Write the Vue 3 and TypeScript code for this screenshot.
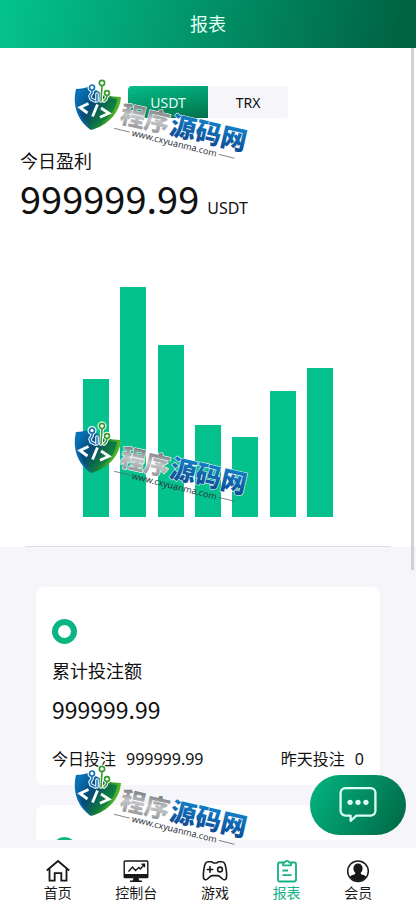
<script setup lang="ts">
import { ref } from 'vue'

type Tab = { id: string; label: string }

const currencies: string[] = ['USDT', 'TRX']
const currency = ref<string>('USDT')

const bars: number[] = [12, 20, 15, 8, 7, 11, 13]
const peak = Math.max(...bars)

const tabs: Tab[] = [
  { id: 'home', label: '首页' },
  { id: 'console', label: '控制台' },
  { id: 'game', label: '游戏' },
  { id: 'report', label: '报表' },
  { id: 'member', label: '会员' },
]
const activeTab = ref<string>('report')

const marks: string[] = ['first', 'second', 'third']
</script>

<template>
  <div class="page">
    <header class="header">
      <h1>报表</h1>
    </header>

    <main class="content">
      <section class="summary">
        <div class="switch">
          <button
            v-for="c in currencies"
            :key="c"
            type="button"
            :class="{ active: c === currency }"
            @click="currency = c"
          >{{ c }}</button>
        </div>
        <h2 class="label">今日盈利</h2>
        <p class="profit"><span class="amount">999999.99</span><span class="unit">{{ currency }}</span></p>
        <div class="chart">
          <div v-for="(b, i) in bars" :key="i" class="bar" :style="{ height: (b / peak) * 100 + '%' }"></div>
        </div>
        <hr class="divider" />
      </section>

      <section class="cards">
        <article class="card">
          <span class="ring"></span>
          <h2 class="label">累计投注额</h2>
          <p class="total">999999.99</p>
          <div class="row">
            <p><span>今日投注</span><span>999999.99</span></p>
            <p><span>昨天投注</span><span>0</span></p>
          </div>
        </article>
        <article class="card">
          <span class="ring"></span>
        </article>
      </section>
    </main>

    <nav class="tabs">
      <a
        v-for="t in tabs"
        :key="t.id"
        :href="'#' + t.id"
        :class="{ active: t.id === activeTab }"
        @click="activeTab = t.id"
      >
        <svg v-if="t.id === 'home'" viewBox="0 0 26 24" fill="none" stroke="currentColor" stroke-width="1.8">
          <path d="M1.8 11.5 13 2l11.200 9.500" />
          <path d="M4.500 10v11.600h5.200v-7.400h6.600v7.400h5.200V10" />
        </svg>
        <svg v-else-if="t.id === 'console'" viewBox="0 0 26 24" fill="none" stroke="currentColor" stroke-width="1.4">
          <rect x="1.200" y="2" width="23.600" height="16.500" rx=".8" />
          <path d="M1 15h24v4H1zM10.500 19h5l.8 2.500H19V23H7v-1.500h2.700z" fill="currentColor" stroke="none" />
          <path d="M5.500 12.500 9.500 8l3 3.500 3.500-3 1.500 1.500 4-5M18.500 5.200h3v3" />
        </svg>
        <svg v-else-if="t.id === 'game'" viewBox="0 0 26 24" fill="none" stroke="currentColor" stroke-width="1.6" stroke-linecap="round" stroke-linejoin="round">
          <path d="M6 2.800h3.500c.8 0 1.200 1.200 2 1.200h3c.8 0 1.200-1.200 2-1.200H20c2.200 0 3.200 2.200 3.800 5.500.7 4 1.200 8.200.6 10.700-.5 1.900-2.300 2.300-3.800 1l-3-2.700a3 3 0 0 0-2-.7h-5.200a3 3 0 0 0-2 .7l-3 2.700c-1.500 1.300-3.300.9-3.800-1C1 16.500 1.500 12.300 2.200 8.300 2.800 5 3.800 2.800 6 2.800z" />
          <path d="M8 7.800v5.400M5.300 10.500h5.400" />
          <circle cx="18" cy="10.500" r="2.400" />
        </svg>
        <svg v-else-if="t.id === 'report'" viewBox="0 0 26 24" fill="none" stroke="currentColor" stroke-width="1.8" stroke-linejoin="round">
          <path d="M9 3.500H5.500A1.500 1.500 0 0 0 4 5v16a1.500 1.500 0 0 0 1.500 1.500h15A1.500 1.500 0 0 0 22 21V5a1.500 1.500 0 0 0-1.500-1.500H17" />
          <path d="M9 3.500h1.800a2.300 2.300 0 0 1 4.400 0H17v2.800H9zM8.500 11.500h5.500M8.500 16.200h9" />
        </svg>
        <svg v-else viewBox="0 0 26 24">
          <circle cx="13" cy="12.200" r="10.300" fill="none" stroke="currentColor" stroke-width="1.500" />
          <path d="M13 4.500c-2.900 0-4.600 2.100-4.600 4.800 0 1.900.8 3.700 2 4.700-.1 1.200-1.200 1.500-2.800 2-1.300.4-2.200 1-2.600 2A10 10 0 0 0 13 22a10 10 0 0 0 8-4c-.4-1-1.300-1.600-2.600-2-1.600-.5-2.700-.8-2.800-2 1.200-1 2-2.800 2-4.700 0-2.700-1.700-4.800-4.600-4.800z" fill="currentColor" />
        </svg>
        <span>{{ t.label }}</span>
      </a>
    </nav>

    <span class="scroll-thumb"></span>

    <button type="button" class="chat" aria-label="客服">
      <svg viewBox="0 0 36 36" fill="none" stroke="currentColor" stroke-width="2.200" stroke-linejoin="round">
        <path d="M6 2h24a4.500 4.500 0 0 1 4.500 4.500v17A4.500 4.500 0 0 1 30 28H16.500L11 33v-5H6a4.500 4.500 0 0 1-4.500-4.500v-17A4.500 4.500 0 0 1 6 2z" />
        <g fill="currentColor" stroke="none">
          <circle cx="10.500" cy="15.500" r="2.500" />
          <circle cx="18" cy="15.500" r="2.500" />
          <circle cx="25.500" cy="15.500" r="2.500" />
        </g>
      </svg>
    </button>

    <div v-for="m in marks" :key="m" class="mark" :class="m">
      <svg viewBox="0 0 180 86">
        <defs>
          <linearGradient :id="m + '-shield'" x1="0" y1="0" x2="1" y2=".3">
            <stop offset="0" stop-color="#0875bd" />
            <stop offset=".45" stop-color="#075d98" />
            <stop offset=".7" stop-color="#14802f" />
            <stop offset="1" stop-color="#5cb72c" />
          </linearGradient>
          <linearGradient :id="m + '-inner'" x1="0" y1="0" x2=".9" y2=".6">
            <stop offset="0" stop-color="#0a7cc4" />
            <stop offset=".5" stop-color="#064a78" />
            <stop offset=".75" stop-color="#0b6a4c" />
            <stop offset="1" stop-color="#118a3c" />
          </linearGradient>
          <linearGradient :id="m + '-grey'" x1="0" y1="0" x2="0" y2="1">
            <stop offset=".2" stop-color="#777b7f" />
            <stop offset=".55" stop-color="#c3c5c7" />
            <stop offset="1" stop-color="#85888b" />
          </linearGradient>
          <linearGradient :id="m + '-blue'" x1="0" y1="0" x2="0" y2="1">
            <stop offset=".2" stop-color="#1480c8" />
            <stop offset="1" stop-color="#0b438c" />
          </linearGradient>
        </defs>
        <path d="M4 11c5 0 10-1 14-3 10 8 20 11 31 11-1 15-12 28-30 33C6 43 0 28 4 11z" :fill="`url(#${m}-shield)`" />
        <path d="M6 13c5 0 9-1 12-2 9 7 18 10 27 10-1 12-10 23-26 28C8 41 3 27 6 13z" :fill="`url(#${m}-inner)`" />
        <g fill="none" stroke-linecap="round" stroke-linejoin="round">
          <path d="M20 12v3l-2 3 1 3 4 2M30 8l-1 15M35 18l-1 3-2 2M25 16v7" stroke="#fff" stroke-width="3.600" />
          <g stroke="#fff" stroke-width="1.500">
            <circle cx="20" cy="9.500" r="3.800" />
            <circle cx="30" cy="5" r="3.800" />
            <circle cx="35" cy="15" r="3.600" />
          </g>
          <path d="M20 12v3l-2 3 1 3 4 2M25 16v7" stroke="#1472b8" stroke-width="1.500" />
          <path d="M30 8l-1 15M35 18l-1 3-2 2" stroke="#359d2f" stroke-width="1.600" />
          <circle cx="20" cy="9.500" r="2.500" fill="#fff" stroke="#1472b8" stroke-width="1.700" />
          <circle cx="30" cy="5" r="2.600" fill="#fff" stroke="#359d2f" stroke-width="1.700" />
          <circle cx="35" cy="15" r="2.400" fill="#fff" stroke="#359d2f" stroke-width="1.700" />
        </g>
        <path d="M16.500 25.500 8 29.500l7.500 5.500M29 30l8 5.300-9 4M25.500 26.500l-5 12" fill="none" stroke="#fff" stroke-width="2.800" />
        <g transform="translate(46 43) rotate(13)">
          <g class="mark-name" stroke="#fff" stroke-width="1" paint-order="stroke">
            <text x="1" y="1" font-size="25" :fill="`url(#${m}-grey)`">程序</text>
            <text x="52" y="1" font-size="26" :fill="`url(#${m}-blue)`">源码网</text>
          </g>
        </g>
        <g transform="translate(46 43) rotate(14)">
          <path d="M-2 8h16M106 8h16" stroke="#596069" stroke-width=".7" />
          <text class="mark-url" x="60" y="11" text-anchor="middle" font-size="9">www.cxyuanma.com</text>
        </g>
      </svg>
    </div>
  </div>
</template>

<style>
body {
  margin: 0;
}
</style>

<style scoped>
.page {
  position: relative;
  display: flex;
  flex-direction: column;
  height: 100vh;
  overflow: hidden;
  background: #f5f5fa;
  color: #111;
  font-family: "Noto Sans", "Noto Sans CJK SC", sans-serif;
}
h1,
h2,
p {
  margin: 0;
  font-weight: 400;
}
button {
  padding: 0;
  border: 0;
  font: inherit;
  cursor: pointer;
}
.header {
  flex: none;
  display: flex;
  align-items: center;
  justify-content: center;
  height: 48px;
  background: linear-gradient(100deg, #04c38f, #006443 95%);
  color: #e4fff5;
}
.header h1 {
  font-size: 18px;
  line-height: 24px;
}
.content {
  flex: 1;
  min-height: 0;
  overflow: hidden;
}
.summary {
  padding: 38px 20px 0;
  background: #fff;
}
.switch {
  display: flex;
  width: 160px;
  height: 32px;
  margin: 0 auto;
  overflow: hidden;
  border-radius: 4px;
  background: #f5f5fa;
}
.switch button {
  flex: 1;
  background: transparent;
  color: #111;
  font-size: 14px;
}
.switch .active {
  background: linear-gradient(170deg, #05bd8a, #007149);
  color: #e4fff5;
}
.label {
  font-size: 18px;
  line-height: 24px;
}
.summary .label {
  margin-top: 31px;
}
.profit {
  display: flex;
  align-items: baseline;
  gap: 8px;
  height: 50px;
  line-height: 50px;
}
.amount,
.total {
  font-family: "Noto Sans CJK SC", sans-serif;
}
.amount {
  font-size: 38px;
}
.unit {
  font-size: 16px;
}
.chart {
  display: flex;
  align-items: flex-end;
  justify-content: space-between;
  width: 250px;
  height: 230px;
  margin: 64px auto 0;
}
.bar {
  width: 26px;
  background: #04c18d;
}
.divider {
  height: 1px;
  margin: 29px 5px 0;
  border: 0;
  background: #dcdde8;
}
.cards {
  display: flex;
  flex-direction: column;
  gap: 20px;
  padding: 40px 36px;
}
.card {
  min-height: 152px;
  padding: 32px 16px 14px;
  border-radius: 8px;
  background: #fff;
}
.ring {
  display: block;
  box-sizing: border-box;
  width: 25px;
  height: 25px;
  border: 6px solid #0ab583;
  border-radius: 50%;
}
.card .label {
  margin-top: 15px;
}
.total {
  margin-top: 10px;
  font-size: 23px;
  line-height: 32px;
}
.row {
  display: flex;
  justify-content: space-between;
  margin-top: 22px;
  font-size: 16px;
  line-height: 24px;
}
.row p {
  display: flex;
  gap: 10px;
}
.tabs {
  flex: none;
  display: flex;
  justify-content: space-evenly;
  height: 56px;
  margin-top: 8px;
  padding-top: 11px;
  background: #fff;
}
.tabs a {
  display: flex;
  flex-direction: column;
  align-items: center;
  color: #181818;
  font-size: 14px;
  line-height: 20px;
  text-decoration: none;
}
.tabs svg {
  width: 26px;
  height: 24px;
}
.tabs .active {
  color: #16b186;
}
.scroll-thumb {
  position: absolute;
  top: 48px;
  right: 2px;
  width: 3px;
  height: 522px;
  background: #d0d0d5;
}
.chat {
  position: absolute;
  right: 10px;
  bottom: 80px;
  display: flex;
  align-items: center;
  justify-content: center;
  width: 96px;
  height: 60px;
  border-radius: 30px;
  background: linear-gradient(120deg, #04b581, #006643);
  color: #d8fff1;
}
.chat svg {
  width: 38px;
  height: 38px;
}
.mark {
  position: absolute;
  left: 72px;
  width: 180px;
  height: 86px;
  pointer-events: none;
}
.mark svg {
  display: block;
  width: 100%;
  height: 100%;
}
.first {
  top: 78px;
}
.second {
  top: 421px;
}
.third {
  top: 764px;
}
.mark-name {
  font-family: "Noto Sans CJK SC", sans-serif;
  font-weight: 900;
}
.mark-url {
  fill: #2c333b;
  font-family: "Noto Sans", sans-serif;
}
</style>
